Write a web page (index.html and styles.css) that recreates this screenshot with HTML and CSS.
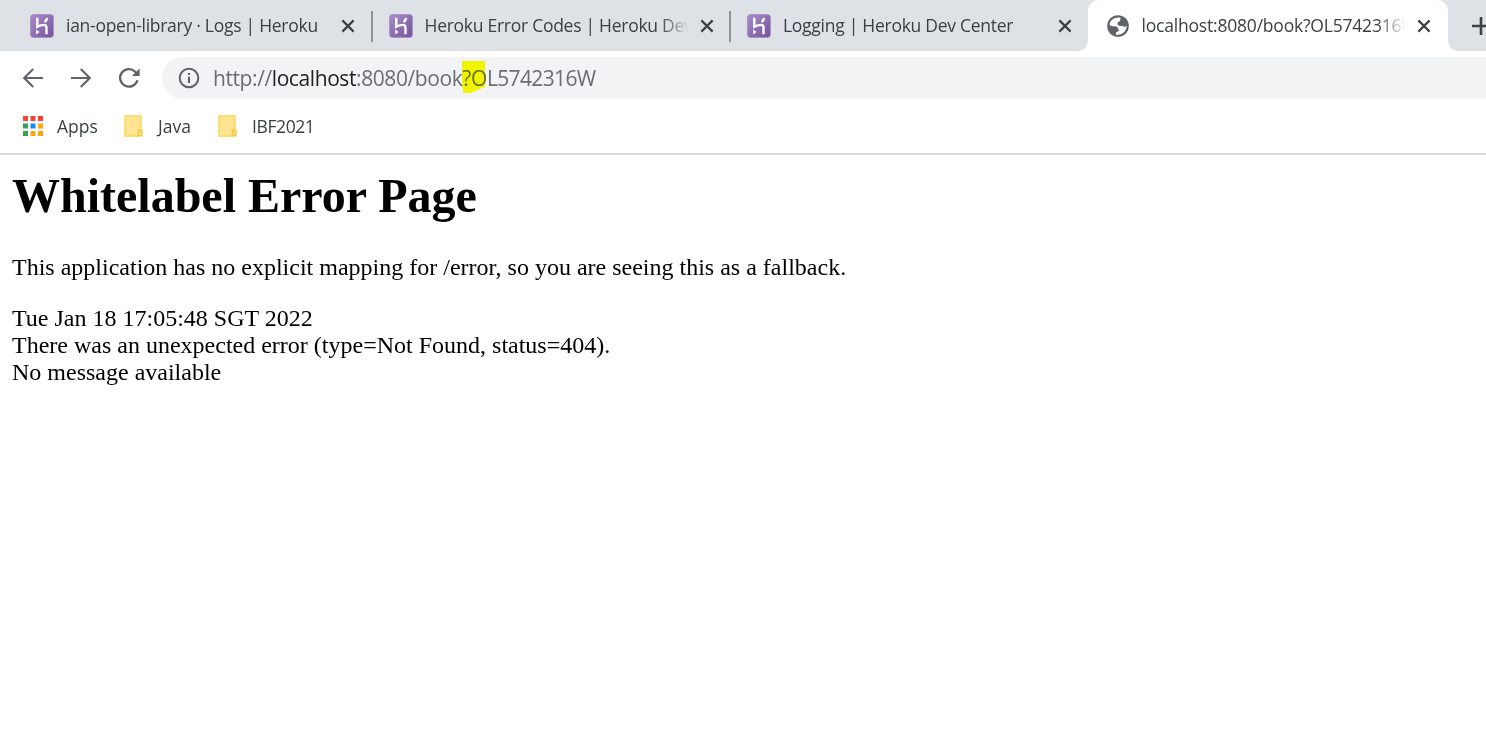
FILE: index.html
```html
<!DOCTYPE html>
<html lang="en">
<head>
<meta charset="utf-8">
<title>Whitelabel Error Page</title>
<link rel="stylesheet" href="styles.css">
</head>
<body>
<svg class="defs" width="0" height="0" aria-hidden="true">
  <defs>
    <linearGradient id="purple" x1="0" y1="0" x2="1" y2="1">
      <stop offset="0" stop-color="#a98cca"/><stop offset="1" stop-color="#75529c"/>
    </linearGradient>
    <symbol id="heroku" viewBox="0 0 24 24">
      <rect x=".5" y=".5" width="23" height="23" rx="3" fill="url(#purple)" stroke="#a994c5"/>
      <path d="M7.3 3.8V12.7C9.6 11.5 12 10.9 13.8 10.9C16 10.9 16.5 12.2 16.5 14V20.3M17 3.8C16.8 5.4 16 6.9 14.7 8.2" fill="none" stroke="#fff" stroke-width="2.4"/>
      <path d="M6.2 15.5L9.5 18L6.2 20.5Z" fill="#fff"/>
    </symbol>
    <symbol id="close" viewBox="0 0 14 14">
      <path d="M1.4 1.4L12.6 12.6M12.6 1.4L1.4 12.6" stroke="#3c4043" stroke-width="2.2"/>
    </symbol>
    <symbol id="folder" viewBox="0 0 19 22">
      <path d="M1 .8H17V14.6H14.4V21H1Z" fill="#ffe592" stroke="#fbd64b" stroke-width="1.3"/>
      <path d="M14.4 20.9V16Q14.4 14.6 16.2 14.6T18 16V20.9Z" fill="#fbdd70" stroke="#ecc94b" stroke-width="1.3"/>
    </symbol>
  </defs>
</svg>

<header class="browser">
  <nav class="tabs">
    <div class="tab">
      <svg class="favicon"><use href="#heroku"/></svg>
      <span class="title">ian-open-library · Logs | Heroku</span>
      <svg class="close"><use href="#close"/></svg>
    </div>
    <div class="tab">
      <svg class="favicon"><use href="#heroku"/></svg>
      <span class="title fade">Heroku Error Codes | Heroku Dev</span>
      <svg class="close"><use href="#close"/></svg>
    </div>
    <div class="tab last">
      <svg class="favicon"><use href="#heroku"/></svg>
      <span class="title">Logging | Heroku Dev Center</span>
      <svg class="close"><use href="#close"/></svg>
    </div>
    <div class="tab active">
      <svg class="favicon" viewBox="0 0 24 24">
        <circle cx="12" cy="12" r="10.8" fill="#5f6368"/>
        <path d="M14.6 3.7C9.5 2.6 4.6 5.6 3.4 10.2C4.2 11.8 5.8 12.4 8.2 12.2C10.8 12 12.2 13.2 12 15.2C13.4 15.6 13.2 17.3 11.6 17.6C10.6 17.8 10 18.4 9.7 20.4C15.6 21.8 20.6 17.6 20.7 11.6C19.6 13.2 17.8 13.4 16.4 11.8C14.4 12.2 11.8 11.6 11.6 9.9C11.4 8.1 12.5 7.4 14 7.3C14.2 6.4 14.2 5.3 14.6 3.7Z" fill="#fff"/>
      </svg>
      <span class="title fade address">localhost:8080/book?OL5742316W</span>
      <svg class="close"><use href="#close"/></svg>
    </div>
    <svg class="plus" viewBox="0 0 18 18"><path d="M9 0V18M0 9H18" stroke="#3c4043" stroke-width="2.6"/></svg>
  </nav>

  <div class="toolbar">
    <svg class="nav-icon" viewBox="0 0 22 22"><path d="M21 11H2.5M11.2 2L2.2 11L11.2 20" fill="none" stroke="#5f6368" stroke-width="2.1"/></svg>
    <svg class="nav-icon" viewBox="0 0 22 22"><path d="M1 11H19.5M10.8 2L19.8 11L10.8 20" fill="none" stroke="#5f6368" stroke-width="2.1"/></svg>
    <svg class="nav-icon" viewBox="0 0 22 22"><path d="M19.4 13.2A8.8 8.8 0 1 1 17.2 4.7L18.4 6" fill="none" stroke="#5f6368" stroke-width="2.3"/><path d="M21.6 1.4V9H13.9Z" fill="#5f6368"/></svg>
    <div class="omnibox">
      <svg class="info" viewBox="0 0 22 22"><circle cx="11" cy="11" r="9.3" fill="none" stroke="#5f6368" stroke-width="2"/><path d="M11 9.7V16M11 6V8" stroke="#5f6368" stroke-width="2.2"/></svg>
      <div class="url">http://<span class="host">localhost</span>:8080/book<span class="marked">?O<svg class="marker" viewBox="0 0 24 32"><path d="M0 0H23V26.5H19V28H16V29.5H13V31H10V32H1V26H0Z" fill="#ff0"/></svg></span><span class="rest">L5742316W</span></div>
    </div>
  </div>

  <div class="bookmarks">
    <svg class="apps" viewBox="0 0 20 20">
      <path d="M0 0H5V5H0ZM7.5 0H12.5V5H7.5ZM15 0H20V5H15Z" fill="#f94038"/>
      <path d="M0 7.5H5V12.5H0ZM0 15H5V20H0Z" fill="#34a152"/>
      <path d="M7.5 7.5H12.5V12.5H7.5Z" fill="#168af5"/>
      <path d="M15 7.5H20V12.5H15ZM7.5 15H12.5V20H7.5ZM15 15H20V20H15Z" fill="#faa70b"/>
    </svg>
    <span class="label l1">Apps</span>
    <svg class="folder"><use href="#folder"/></svg>
    <span class="label l2">Java</span>
    <svg class="folder"><use href="#folder"/></svg>
    <span class="label l3">IBF2021</span>
  </div>
</header>

<main class="page">
  <h1>Whitelabel Error Page</h1>
  <p>This application has no explicit mapping for /error, so you are seeing this as a fallback.</p>
  <div>Tue Jan 18 17:05:48 SGT 2022</div>
  <div>There was an unexpected error (type=Not Found, status=404).</div>
  <div>No message available</div>
</main>
</body>
</html>
```
FILE: styles.css
```css
* { box-sizing: border-box; }
body { margin: 0; height: 750px; overflow: hidden; background: #fff; }
svg { display: block; flex: none; }
.defs { position: absolute; }

.browser {
  height: 155px;
  border-bottom: 2px solid #dadada;
  font-family: "Open Sans", "Noto Sans", sans-serif;
  color: #3c4043;
}

.tabs { display: flex; height: 51px; padding-left: 12.5px; background: #dee1e6; overflow: hidden; }
.tab {
  display: flex;
  flex: none;
  align-items: center;
  width: 358.5px;
  height: 51px;
  padding-left: 17.5px;
  position: relative;
}
.tab:not(.last):not(.active)::after {
  content: "";
  position: absolute;
  right: -1.5px;
  top: 11px;
  width: 2px;
  height: 31px;
  background: #8f9296;
}
.favicon { width: 24px; height: 24px; margin-top: 1px; }
.title {
  width: 263px;
  margin: 0 0 1px 12px;
  font-size: 17.5px;
  line-height: 26px;
  letter-spacing: -0.27px;
  white-space: nowrap;
}
.address { letter-spacing: -0.2px; }
.fade { mask-image: linear-gradient(90deg, #000 235px, transparent 264px); }
.close { width: 14px; height: 14px; margin-left: 12px; }
.plus { width: 18px; height: 18px; margin: 17px 0 0 24px; }

.active { width: 359.5px; background: #fff; border-radius: 11px 11px 0 0; }
.active::before, .active::after {
  content: "";
  position: absolute;
  bottom: 0;
  width: 10px;
  height: 10px;
}
.active::before { left: -10px; background: radial-gradient(circle at 0 0, transparent 9.5px, #fff 10px); }
.active::after { right: -10px; background: radial-gradient(circle at 100% 0, transparent 9.5px, #fff 10px); }

.toolbar { display: flex; align-items: center; gap: 26px; height: 54px; padding-left: 22px; }
.nav-icon { width: 22px; height: 22px; }
.omnibox {
  display: flex;
  flex: 1;
  align-items: center;
  height: 42px;
  margin-left: -4px;
  padding-left: 16px;
  border-radius: 21px 0 0 21px;
  background: #f1f3f4;
}
.info { width: 22px; height: 22px; }
.url { margin-left: 13px; font-size: 21px; line-height: 30px; letter-spacing: -0.41px; white-space: nowrap; color: #6b6e72; }
.host { color: #202124; }
.rest { letter-spacing: -0.65px; }
.marked { position: relative; }
.marker { position: absolute; left: 0; top: -3px; width: 24px; height: 32px; mix-blend-mode: multiply; }

.bookmarks { display: flex; align-items: center; height: 42px; padding-left: 23px; }
.apps { width: 20px; height: 20px; margin-top: -1px; }
.label { margin-bottom: 1px; font-size: 17.5px; line-height: 26px; white-space: nowrap; }
.folder { width: 19px; height: 22px; }
.l1 { width: 81px; padding-left: 14px; }
.l2 { width: 75px; padding-left: 15px; }
.l3 { padding-left: 15px; letter-spacing: -0.4px; }

.page {
  padding: 14px 12px;
  font-family: "Liberation Serif", "Times New Roman", serif;
  font-size: 24px;
  line-height: 27px;
  color: #000;
}
h1 { margin: 0 0 31px; font-size: 48px; line-height: 54px; }
p { margin: 0 0 24px; }
```
